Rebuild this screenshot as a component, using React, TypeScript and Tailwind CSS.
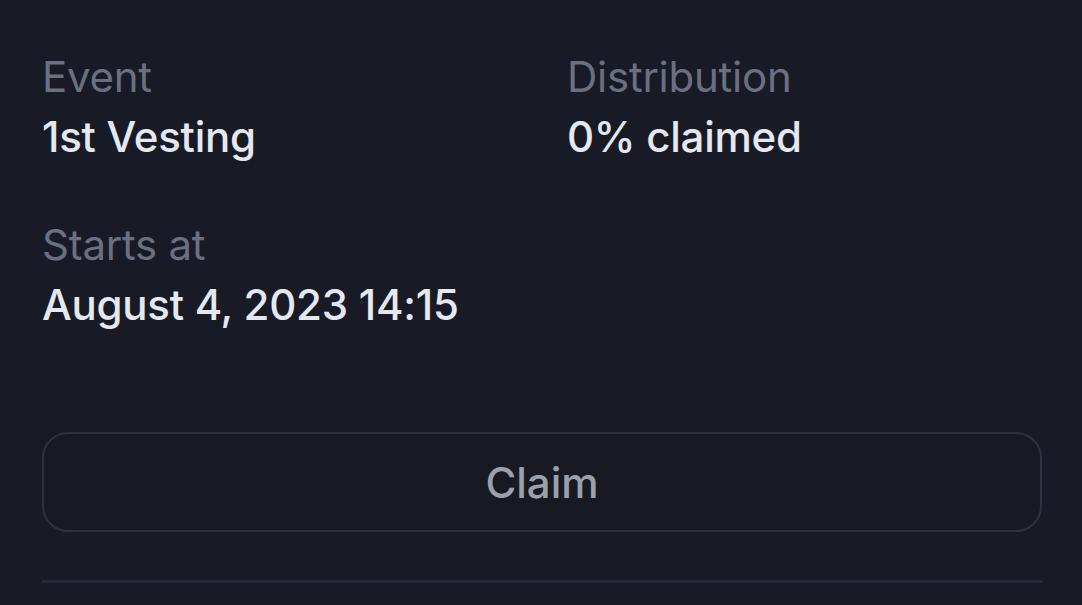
import React from 'react';

const Field = ({ label, value }: { label: string; value: string }) => (
  <div className="flex flex-col tracking-[-0.25px]">
    <span className="text-[42px] leading-[60px] text-[#6b7080]">{label}</span>
    <span className="text-[42px] leading-[60px] font-medium text-[#e6e8f0]">{value}</span>
  </div>
);

export default function App() {
  return (
    <div
      className="w-[1082px] h-[605px] overflow-hidden bg-[#181b25] px-[42px] pt-[47px]"
      style={{ fontFamily: 'Inter, "Noto Sans", sans-serif' }}
    >
      {/* Details */}
      <div className="grid grid-cols-2 gap-x-[50px] gap-y-[48px] w-[1000px]">
        <Field label="Event" value="1st Vesting" />
        <Field label="Distribution" value="0% claimed" />
        <Field label="Starts at" value="August 4, 2023 14:15" />
      </div>

      {/* Action */}
      <button className="mt-[97px] w-[1000px] h-[100px] rounded-[26px] border-2 border-[#2e3240] bg-[#171a23] text-[42px] font-medium text-[#9ca0ab]">
        Claim
      </button>

      <div className="mt-[48px] w-[1001px] h-[3px] bg-[#252936]" />
    </div>
  );
}
